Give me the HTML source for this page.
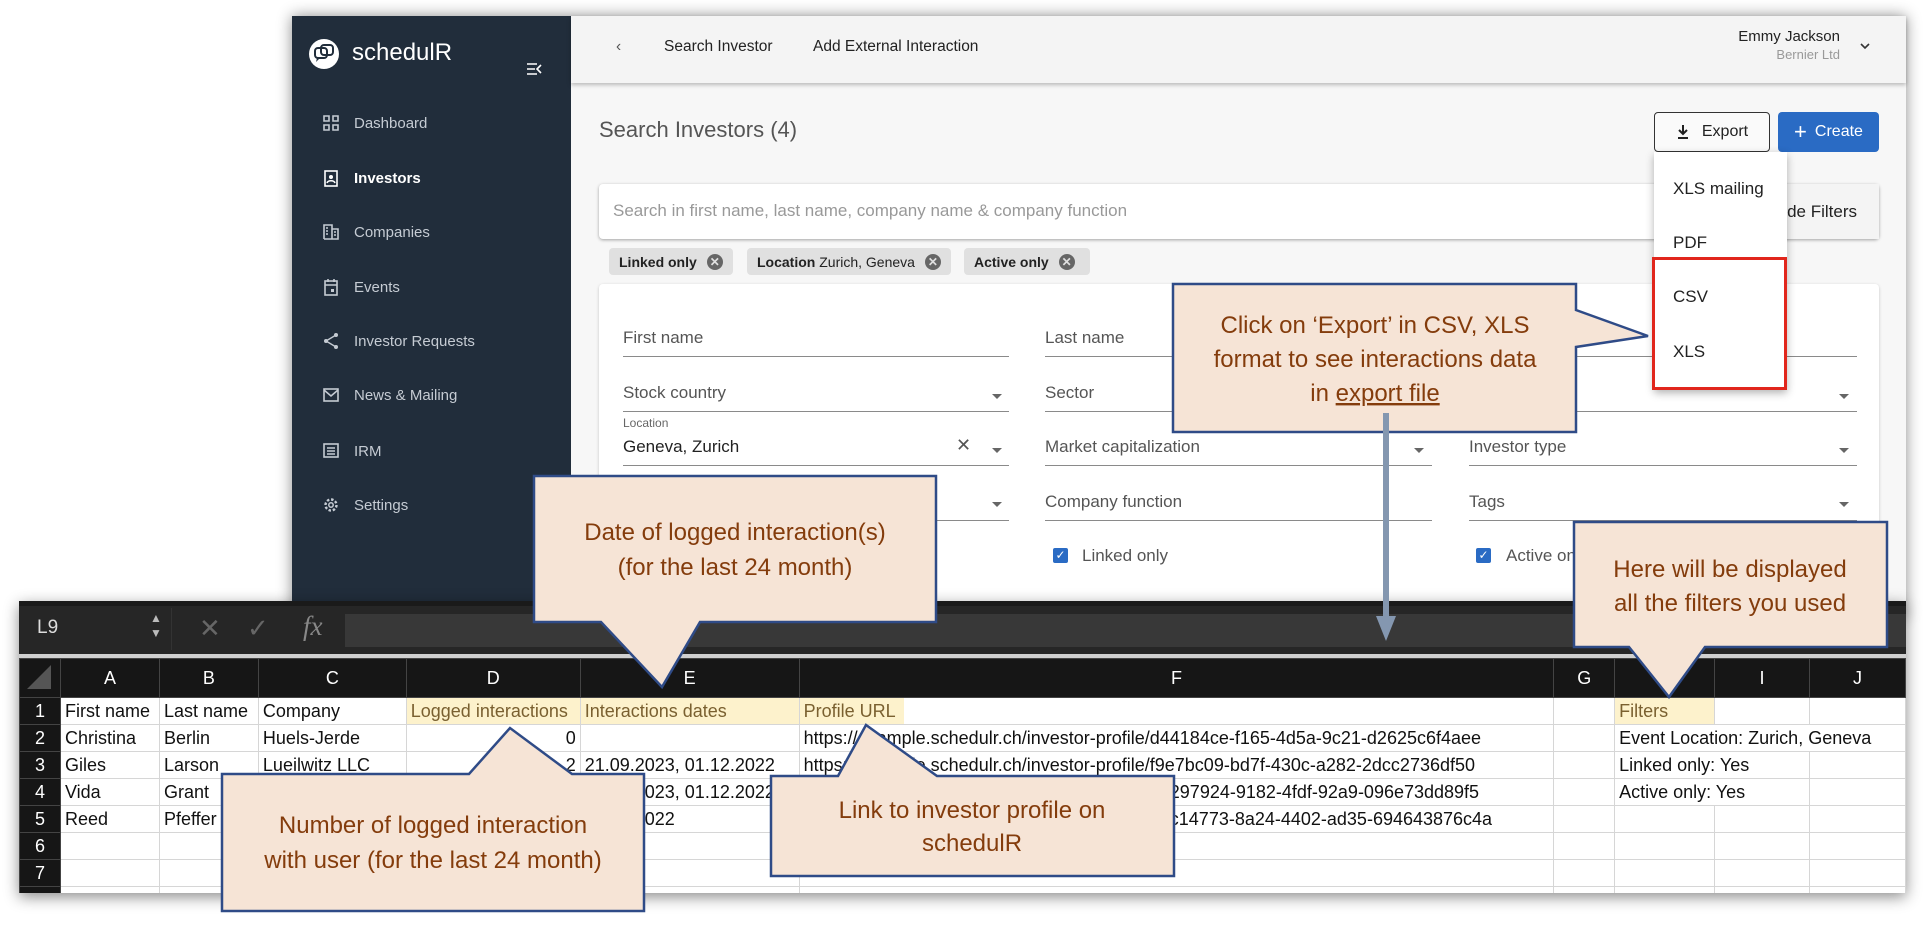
<!DOCTYPE html>
<html><head><meta charset="utf-8">
<style>
*{box-sizing:border-box;margin:0;padding:0}
body{width:1926px;height:926px;background:#fff;position:relative;overflow:hidden;font-family:"Liberation Sans",sans-serif}
.abs{position:absolute}
#app{left:292px;top:16px;width:1614px;height:600px;background:#f7f7f7;box-shadow:0 0 14px rgba(0,0,0,.45)}
#side{left:0;top:0;width:279px;height:600px;background:#212d3b}
.nav{position:absolute;left:30px;color:#c5cbd3;font-size:15px;display:flex;align-items:center}
.nav svg{width:18px;height:18px;margin-right:14px}
#hdr{left:279px;top:0;width:1335px;height:67px;background:#f4f4f4;box-shadow:0 2px 4px rgba(0,0,0,.25)}
.ht{position:absolute;top:22px;font-size:15.5px;color:#222;font-weight:500}
.fld{position:absolute;border-bottom:1.5px solid #8a8a8a;height:0}
.lbl{position:absolute;font-size:17px;color:#555}
.dd{position:absolute;width:0;height:0;border-left:5px solid transparent;border-right:5px solid transparent;border-top:5px solid #666}
.chip{position:absolute;top:232px;height:27px;background:#e0e0e0;border-radius:4px;font-size:14px;color:#222;display:flex;align-items:center;padding:0 10px}
.chip b{font-weight:bold}
.x{display:inline-block;width:16px;height:16px;border-radius:50%;background:#666;color:#e0e0e0;font-size:12px;line-height:16px;text-align:center;margin-left:10px;font-weight:bold}
#xl{left:19px;top:601px;width:1887px;height:292px;background:#fff;box-shadow:0 4px 14px rgba(0,0,0,.45);overflow:hidden}
table{border-collapse:collapse;table-layout:fixed;position:absolute;left:0;top:57px}
td{height:27px;border:1.5px solid #d6d6d6;font-family:"Liberation Sans Narrow","Liberation Sans",sans-serif;font-size:18px;color:#111;white-space:nowrap;overflow:visible;padding:0 4px;vertical-align:middle}
tr.h td{height:39px;background:#161616;color:#fff;text-align:center;border:1px solid #444;font-size:18px}
td.rn{background:#161616;color:#fff;text-align:center;border-color:#444}
td.y{background:#fdf2cc}
.co{font-family:"Liberation Sans Narrow","Liberation Sans",sans-serif;font-size:24px;fill:#843c0c}
</style></head><body>

<div id="app" class="abs">
 <div id="side" class="abs">
  <svg class="abs" style="left:16px;top:22px" width="32" height="32" viewBox="0 0 32 32"><circle cx="16" cy="16" r="15" fill="#fff"/><rect x="7" y="10" width="12" height="10" rx="3" fill="none" stroke="#212d3b" stroke-width="2"/><rect x="13" y="7" width="12" height="10" rx="3" fill="none" stroke="#212d3b" stroke-width="2"/><path d="M9 20 l-1 4 4-4" fill="#212d3b"/></svg>
  <div class="abs" style="left:60px;top:23px;color:#fff;font-size:24px">schedulR</div>
  <svg class="abs" style="left:234px;top:46px" width="16" height="14" viewBox="0 0 16 14"><path d="M1 2h10M1 7h8M1 12h10M15 3l-4 4 4 4" stroke="#fff" stroke-width="1.6" fill="none"/></svg>
  <div class="nav" style="top:98px"><svg viewBox="0 0 18 18"><path d="M2 2h5v5H2zM11 2h5v5h-5zM2 11h5v5H2zM11 11h5v5h-5z" fill="none" stroke="#c5cbd3" stroke-width="1.6"/></svg>Dashboard</div>
  <div class="nav" style="top:153px;color:#fff;font-weight:bold"><svg viewBox="0 0 18 18"><rect x="3" y="2" width="12" height="15" fill="none" stroke="#fff" stroke-width="1.6"/><circle cx="9" cy="8" r="2" fill="#fff"/><path d="M5 14c1-3 7-3 8 0" stroke="#fff" stroke-width="1.5" fill="none"/></svg>Investors</div>
  <div class="nav" style="top:207px"><svg viewBox="0 0 18 18"><path d="M2 16V2h8v14M10 6h6v10H2" fill="none" stroke="#c5cbd3" stroke-width="1.6"/><path d="M4 5h2M4 8h2M4 11h2M12 9h2M12 12h2" stroke="#c5cbd3" stroke-width="1.6"/></svg>Companies</div>
  <div class="nav" style="top:262px"><svg viewBox="0 0 18 18"><rect x="3" y="3" width="12" height="14" fill="none" stroke="#c5cbd3" stroke-width="1.6"/><path d="M3 7h12M6 1v3M12 1v3" stroke="#c5cbd3" stroke-width="1.6"/><rect x="9" y="11" width="3" height="3" fill="#c5cbd3"/></svg>Events</div>
  <div class="nav" style="top:316px"><svg viewBox="0 0 18 18"><circle cx="14" cy="3" r="2" fill="#c5cbd3"/><circle cx="4" cy="9" r="2" fill="#c5cbd3"/><circle cx="14" cy="15" r="2" fill="#c5cbd3"/><path d="M14 3L4 9l10 6" stroke="#c5cbd3" stroke-width="1.4" fill="none"/></svg>Investor Requests</div>
  <div class="nav" style="top:370px"><svg viewBox="0 0 18 18"><rect x="2" y="3" width="14" height="12" fill="none" stroke="#c5cbd3" stroke-width="1.6"/><path d="M2 4l7 6 7-6" stroke="#c5cbd3" stroke-width="1.6" fill="none"/></svg>News &amp; Mailing</div>
  <div class="nav" style="top:426px"><svg viewBox="0 0 18 18"><rect x="2" y="2" width="14" height="13" fill="none" stroke="#c5cbd3" stroke-width="1.6"/><path d="M5 6h8M5 9h8M5 12h8" stroke="#c5cbd3" stroke-width="1.4"/></svg>IRM</div>
  <div class="nav" style="top:480px"><svg viewBox="0 0 18 18"><circle cx="9" cy="9" r="5.5" fill="none" stroke="#c5cbd3" stroke-width="2.4" stroke-dasharray="2.5 1.8"/><circle cx="9" cy="9" r="2.2" fill="none" stroke="#c5cbd3" stroke-width="1.5"/></svg>Settings</div>
 </div>
 <div id="hdr" class="abs">
  <div class="ht" style="left:45px;color:#555">&#8249;</div>
  <div class="ht" style="left:93px">Search Investor</div>
  <div class="ht" style="left:242px">Add External Interaction</div>
  <div class="abs" style="right:66px;top:12px;text-align:right;font-size:15px;color:#222">Emmy Jackson<div style="font-size:13px;color:#999;margin-top:2px">Bernier Ltd</div></div>
  <svg class="abs" style="left:1288px;top:25px" width="12" height="10"><path d="M2 3l4 4 4-4" stroke="#333" stroke-width="1.6" fill="none"/></svg>
 </div>
 <div class="abs" style="left:307px;top:101px;font-size:22px;color:#555">Search Investors (4)</div>
 <div class="abs" style="left:1362px;top:96px;width:116px;height:40px;border:1.5px solid #333;border-radius:4px;background:#fafafa;font-size:16px;color:#222;display:flex;align-items:center;justify-content:center"><svg width="14" height="16" style="margin-right:12px"><path d="M7 1v9M3 6l4 4 4-4M2 14h10" stroke="#222" stroke-width="2" fill="none"/></svg>Export</div>
 <div class="abs" style="left:1486px;top:96px;width:101px;height:40px;background:#2a6bc4;border-radius:4px;color:#fff;font-size:16px;display:flex;align-items:center;justify-content:center"><span style="font-size:22px;margin-right:8px;font-weight:300">+</span>Create</div>
 <div class="abs" style="left:307px;top:168px;width:1280px;height:55px;background:#fff;border-radius:4px;box-shadow:0 1px 3px rgba(0,0,0,.35)">
  <div class="abs" style="left:14px;top:17px;font-size:17px;color:#999">Search in first name, last name, company name &amp; company function</div>
  <div class="abs" style="right:0;top:0;width:180px;height:55px;background:#f4f4f4;font-size:17px;color:#222;padding:18px 0 0 0;text-align:right;padding-right:22px">Hide Filters</div>
 </div>
 <div class="chip" style="left:317px"><b>Linked only</b><span class="x">✕</span></div>
 <div class="chip" style="left:455px"><b>Location</b>&nbsp;Zurich, Geneva<span class="x">✕</span></div>
 <div class="chip" style="left:672px;width:126px"><b>Active only</b><span class="x">✕</span></div>
 <div class="abs" style="left:307px;top:268px;width:1280px;height:340px;background:#fff;border-radius:4px;box-shadow:0 1px 3px rgba(0,0,0,.2)"></div>
 <div class="lbl" style="left:331px;top:312px">First name</div><div class="fld" style="left:331px;top:340px;width:386px"></div>
 <div class="lbl" style="left:753px;top:312px">Last name</div><div class="fld" style="left:753px;top:340px;width:387px"></div>
 <div class="fld" style="left:1177px;top:340px;width:388px"></div>
 <div class="lbl" style="left:331px;top:367px">Stock country</div><div class="dd" style="left:700px;top:378px"></div><div class="fld" style="left:331px;top:395px;width:386px"></div>
 <div class="lbl" style="left:753px;top:367px">Sector</div><div class="fld" style="left:753px;top:395px;width:387px"></div>
 <div class="lbl" style="left:1177px;top:367px">Investor type</div><div class="dd" style="left:1547px;top:378px"></div><div class="fld" style="left:1177px;top:395px;width:388px"></div>
 <div class="abs" style="left:331px;top:400px;font-size:12px;color:#666">Location</div>
 <div class="lbl" style="left:331px;top:421px;color:#222">Geneva, Zurich</div><div class="abs" style="left:664px;top:419px;font-size:18px;color:#555">✕</div><div class="dd" style="left:700px;top:432px"></div><div class="fld" style="left:331px;top:449px;width:386px"></div>
 <div class="lbl" style="left:753px;top:421px">Market capitalization</div><div class="dd" style="left:1122px;top:432px"></div><div class="fld" style="left:753px;top:449px;width:387px"></div>
 <div class="lbl" style="left:1177px;top:421px">Investor type</div><div class="dd" style="left:1547px;top:432px"></div><div class="fld" style="left:1177px;top:449px;width:388px"></div>
 <div class="dd" style="left:700px;top:486px"></div><div class="fld" style="left:331px;top:504px;width:386px"></div>
 <div class="lbl" style="left:753px;top:476px">Company function</div><div class="fld" style="left:753px;top:504px;width:387px"></div>
 <div class="lbl" style="left:1177px;top:476px">Tags</div><div class="dd" style="left:1547px;top:486px"></div><div class="fld" style="left:1177px;top:504px;width:388px"></div>
 <div class="abs" style="left:761px;top:532px;width:15px;height:15px;background:#2a6bc4;border-radius:2px;color:#fff;font-size:12px;text-align:center;line-height:15px">✓</div><div class="lbl" style="left:790px;top:530px">Linked only</div>
 <div class="abs" style="left:1184px;top:532px;width:15px;height:15px;background:#2a6bc4;border-radius:2px;color:#fff;font-size:12px;text-align:center;line-height:15px">✓</div><div class="lbl" style="left:1214px;top:530px">Active only</div>
 <div class="abs" style="left:1362px;top:136px;width:133px;height:238px;background:#fff;box-shadow:0 3px 8px rgba(0,0,0,.3)">
  <div class="abs" style="left:19px;top:27px;font-size:17px;color:#222">XLS mailing</div>
  <div class="abs" style="left:19px;top:81px;font-size:17px;color:#222">PDF</div>
  <div class="abs" style="left:19px;top:135px;font-size:17px;color:#222">CSV</div>
  <div class="abs" style="left:19px;top:190px;font-size:17px;color:#222">XLS</div>
 </div>
 <div class="abs" style="left:1360px;top:241px;width:135px;height:133px;border:3px solid #e1261c"></div>
</div>

<div id="xl" class="abs">
 <div class="abs" style="left:0;top:0;width:1887px;height:53px;background:#262626"></div>
 <div class="abs" style="left:0;top:0;width:1887px;height:5px;background:#1a1a1a"></div>
 <div class="abs" style="left:18px;top:16px;color:#ddd;font-size:19px;font-family:'Liberation Sans Narrow','Liberation Sans',sans-serif">L9</div>
 <div class="abs" style="left:131px;top:10px;color:#bbb;font-size:12px;line-height:15px">▲<br>▼</div>
 <div class="abs" style="left:152px;top:7px;width:1px;height:42px;background:#333"></div>
 <div class="abs" style="left:180px;top:12px;color:#666;font-size:26px">✕</div>
 <div class="abs" style="left:228px;top:12px;color:#666;font-size:26px">✓</div>
 <div class="abs" style="left:284px;top:10px;color:#888;font-size:27px;font-style:italic;font-family:'Liberation Serif',serif">fx</div>
 <div class="abs" style="left:326px;top:13px;width:1561px;height:33px;background:#383838"></div>
 <div class="abs" style="left:0;top:53px;width:1887px;height:4px;background:#d0d0d0"></div>
 <table>
  <colgroup><col style="width:41px"><col style="width:99px"><col style="width:99px"><col style="width:148px"><col style="width:174px"><col style="width:219px"><col style="width:755px"><col style="width:61px"><col style="width:100px"><col style="width:95px"><col style="width:96px"></colgroup>
  <tr class="h"><td style="background:#161616"><svg width="30" height="30"><path d="M26 4v24H2z" fill="#555"/></svg></td><td>A</td><td>B</td><td>C</td><td>D</td><td>E</td><td>F</td><td>G</td><td>H</td><td>I</td><td>J</td></tr>
  <tr><td class="rn">1</td><td>First name</td><td>Last name</td><td>Company</td><td class="y" style="color:#7a6030">Logged interactions</td><td class="y" style="color:#7a6030">Interactions dates</td><td style="padding:0"><span style="display:inline-block;background:#fdf2cc;color:#7a6030;height:26px;line-height:26px;padding:0 4px;width:104px">Profile URL</span></td><td></td><td class="y" style="color:#7a6030">Filters</td><td></td><td></td></tr>
  <tr><td class="rn">2</td><td>Christina</td><td>Berlin</td><td>Huels-Jerde</td><td style="text-align:right">0</td><td></td><td>https://example.schedulr.ch/investor-profile/d44184ce-f165-4d5a-9c21-d2625c6f4aee</td><td></td><td colspan="3">Event Location: Zurich, Geneva</td></tr>
  <tr><td class="rn">3</td><td>Giles</td><td>Larson</td><td>Lueilwitz LLC</td><td style="text-align:right">2</td><td>21.09.2023, 01.12.2022</td><td>https://example.schedulr.ch/investor-profile/f9e7bc09-bd7f-430c-a282-2dcc2736df50</td><td></td><td colspan="2">Linked only: Yes</td><td></td></tr>
  <tr><td class="rn">4</td><td>Vida</td><td>Grant</td><td></td><td></td><td>21.09.2023, 01.12.2022</td><td>https://example.schedulr.ch/investor-profile/ee297924-9182-4fdf-92a9-096e73dd89f5</td><td></td><td colspan="2">Active only: Yes</td><td></td></tr>
  <tr><td class="rn">5</td><td>Reed</td><td>Pfeffer</td><td></td><td></td><td>01.12.2022</td><td>https://example.schedulr.ch/investor-profile/81c14773-8a24-4402-ad35-694643876c4a</td><td></td><td></td><td></td><td></td></tr>
  <tr><td class="rn">6</td><td></td><td></td><td></td><td></td><td></td><td></td><td></td><td></td><td></td><td></td></tr>
  <tr><td class="rn">7</td><td></td><td></td><td></td><td></td><td></td><td></td><td></td><td></td><td></td><td></td></tr>
  <tr><td class="rn">8</td><td></td><td></td><td></td><td></td><td></td><td></td><td></td><td></td><td></td><td></td></tr>
 </table>
</div>

<svg class="abs" style="left:0;top:0" width="1926" height="926">
 <g fill="#f6e4d6" stroke="#2f4b87" stroke-width="2.5" stroke-linejoin="miter">
  <path d="M1173 284H1576V310L1648 336L1576 347V432H1173Z"/>
  <path d="M534 476H936V622H700L662 687L601 622H534Z"/>
  <path d="M1574 522H1887V647H1705L1669 697L1629 647H1574Z"/>
  <path d="M222 774H469L510 728L572 774H644V911H222Z"/>
  <path d="M771 776H838L866 725L937 776H1174V876H771Z"/>
 </g>
 <rect x="1383" y="413" width="6" height="207" fill="#8497b0"/>
 <path d="M1376 616H1396L1386 641Z" fill="#8497b0"/>
 <g class="co" text-anchor="middle">
  <text x="1375" y="333">Click on ‘Export’ in CSV, XLS</text>
  <text x="1375" y="367">format to see interactions data</text>
  <text x="1375" y="401">in <tspan text-decoration="underline">export file</tspan></text>
  <text x="735" y="540">Date of logged interaction(s)</text>
  <text x="735" y="575">(for the last 24 month)</text>
  <text x="1730" y="577">Here will be displayed</text>
  <text x="1730" y="611">all the filters you used</text>
  <text x="433" y="833">Number of logged interaction</text>
  <text x="433" y="868">with user (for the last 24 month)</text>
  <text x="972" y="818">Link to investor profile on</text>
  <text x="972" y="851">schedulR</text>
 </g>
</svg>
</body></html>
